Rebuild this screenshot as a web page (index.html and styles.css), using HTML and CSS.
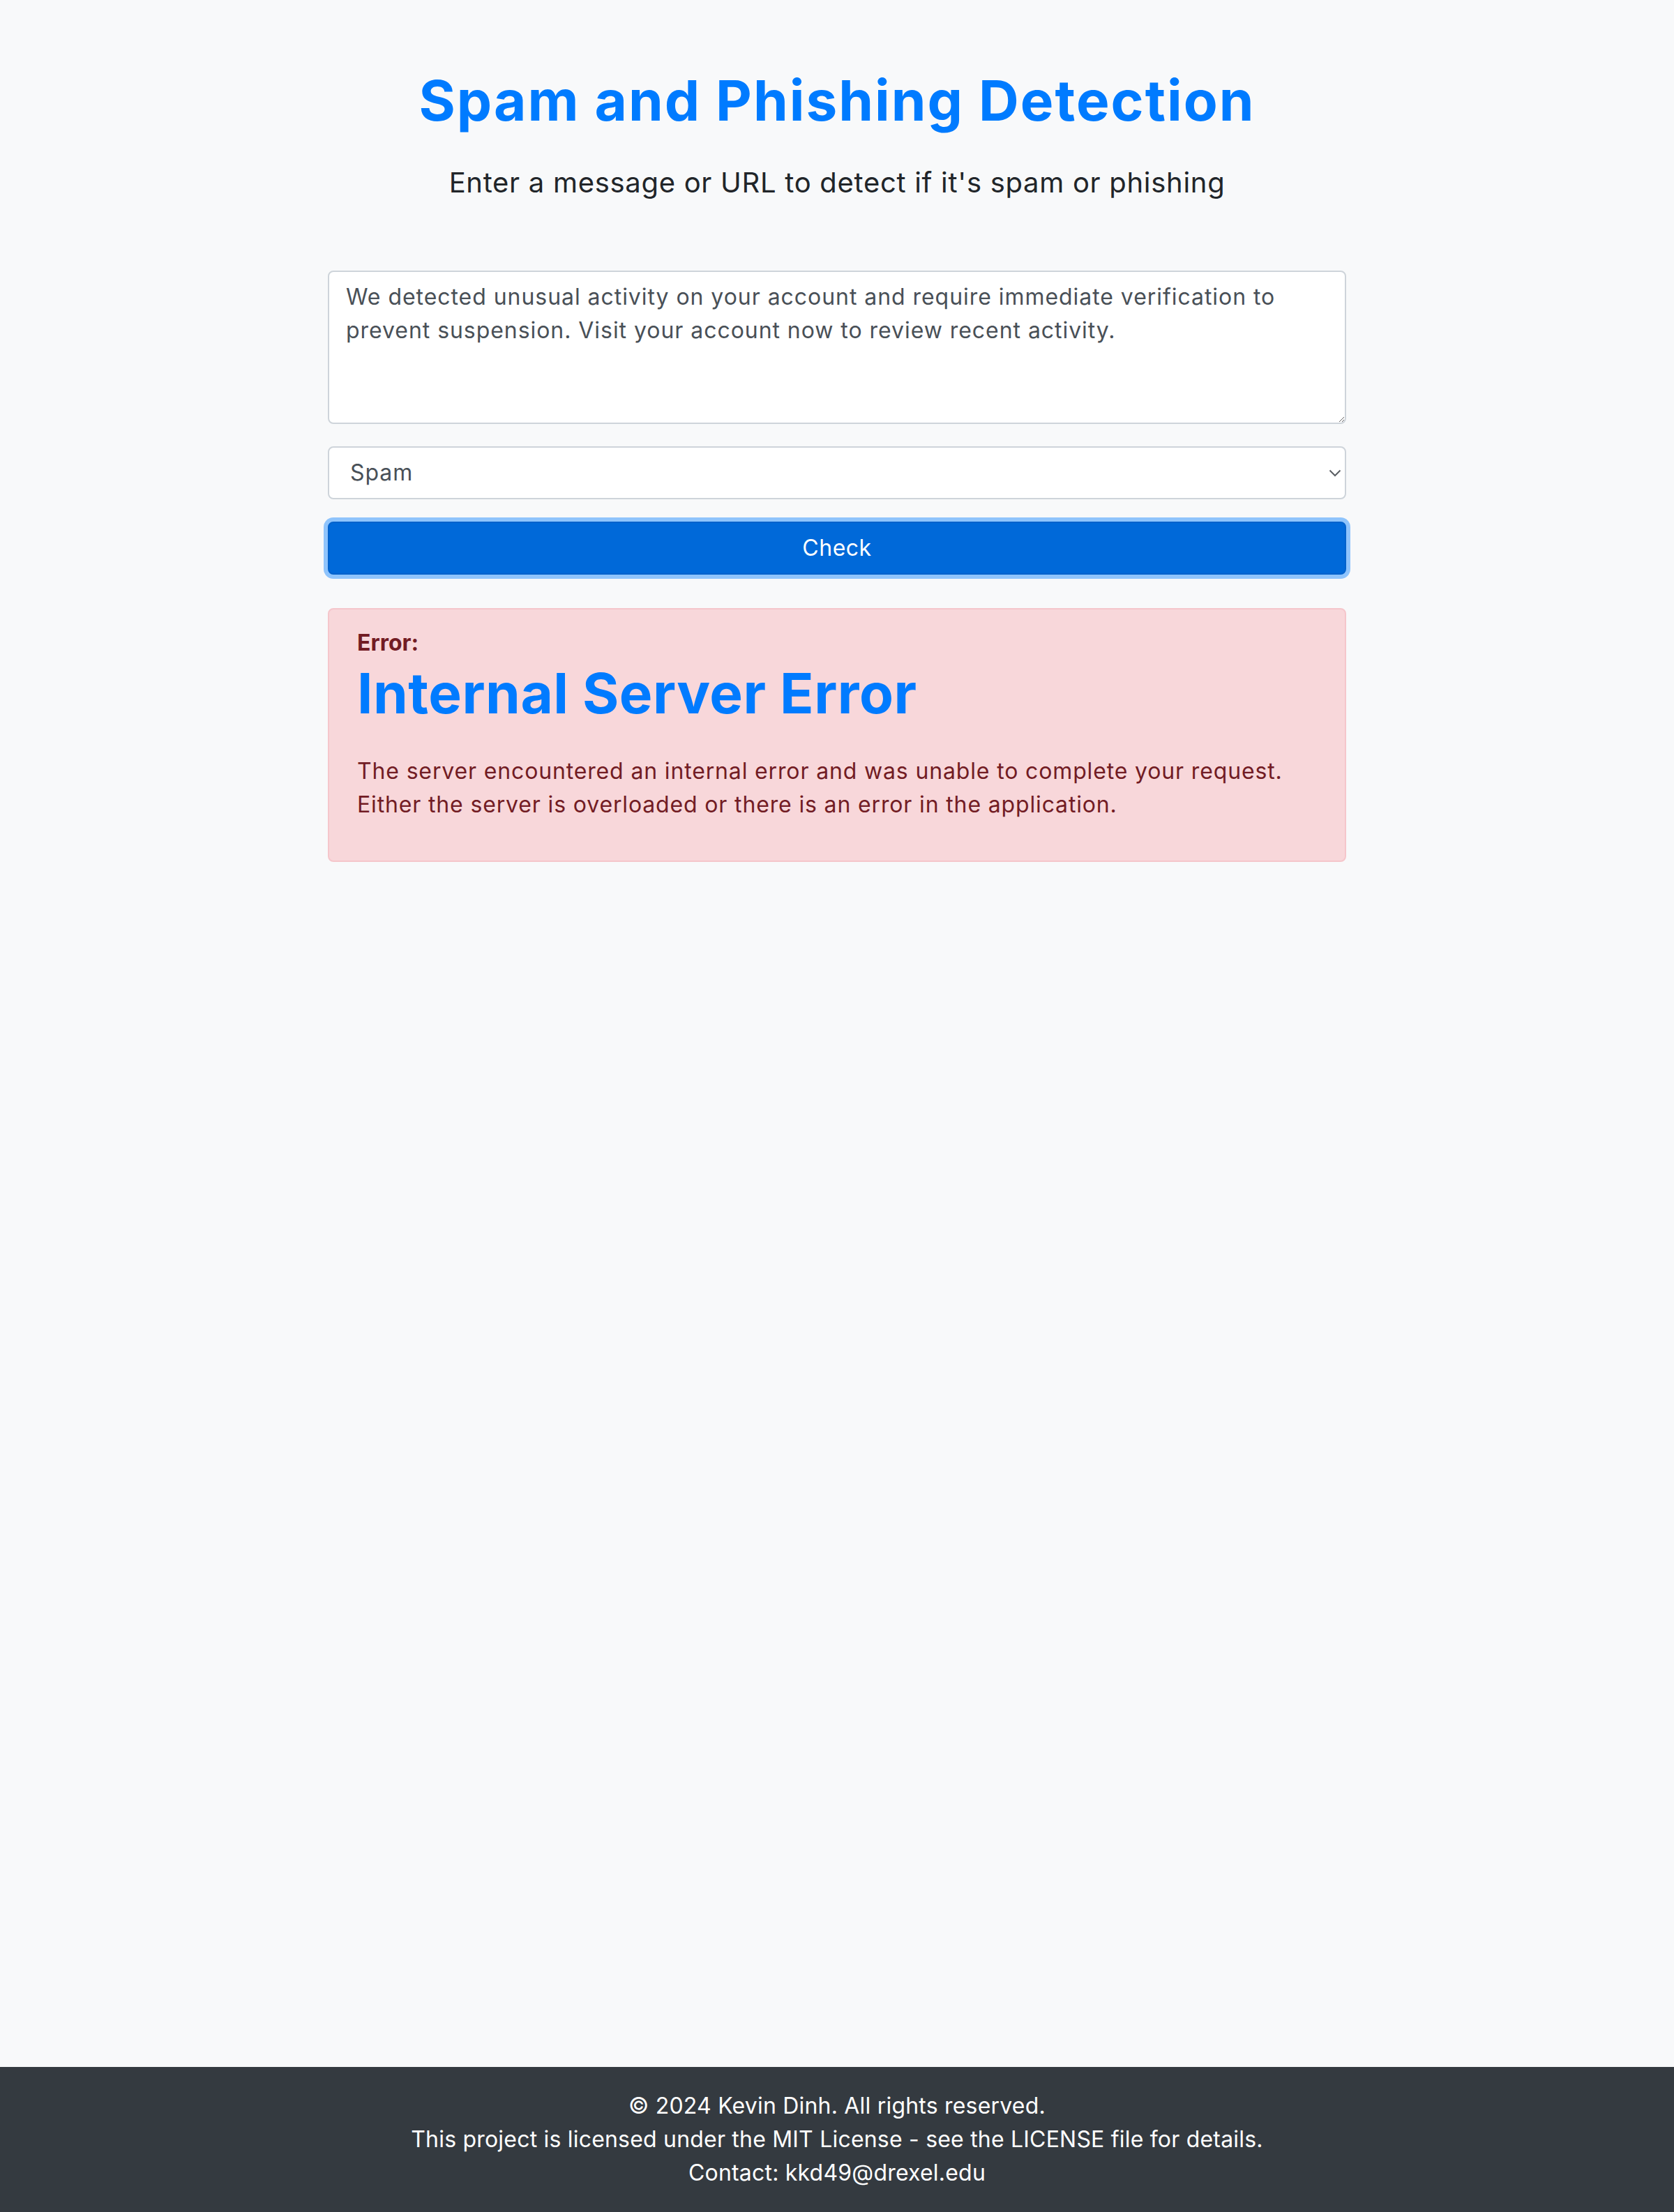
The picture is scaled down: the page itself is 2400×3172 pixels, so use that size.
FILE: index.html
```html
<!DOCTYPE html>
<html lang="en">
<head>
<meta charset="utf-8">
<title>Spam and Phishing Detection</title>
<link rel="stylesheet" href="styles.css">
</head>
<body>
<main class="page">
  <div class="container">
    <h1 class="title">Spam and Phishing Detection</h1>
    <p class="lead">Enter a message or URL to detect if it's spam or phishing</p>
    <form class="form">
      <textarea class="field textarea" rows="4">We detected unusual activity on your account and require immediate verification to prevent suspension. Visit your account now to review recent activity.</textarea>
      <div class="select-wrap">
        <select class="field select">
          <option>Spam</option>
          <option>Phishing</option>
        </select>
        <svg class="chevron" width="18" height="11" viewBox="0 0 18 11" aria-hidden="true"><path d="M1.5 1.5 L9 9 L16.5 1.5" fill="none" stroke="#5a5e63" stroke-width="2"/></svg>
      </div>
      <button type="button" class="btn">Check</button>
    </form>
    <div class="alert">
      <strong class="alert-label">Error:</strong>
      <h1 class="alert-title">Internal Server Error</h1>
      <p class="alert-text">The server encountered an internal error and was unable to complete your request. Either the server is overloaded or there is an error in the application.</p>
    </div>
  </div>
</main>
<footer class="footer">
  <p class="footer-line">© 2024 Kevin Dinh. All rights reserved.</p>
  <p class="footer-line">This project is licensed under the MIT License - see the LICENSE file for details.</p>
  <p class="footer-line">Contact: kkd49@drexel.edu</p>
</footer>
</body>
</html>
```
FILE: styles.css
```css
* { box-sizing: border-box; }
html, body { margin: 0; padding: 0; }
body {
  min-height: 100vh;
  display: flex;
  flex-direction: column;
  background: #f8f9fa;
  color: #212529;
  font-family: Inter, "Open Sans", "Liberation Sans", sans-serif;
  font-size: 32px;
  line-height: 48px;
}
.page { flex: 1; }
.container {
  width: 1460px;
  margin: 0 auto;
  padding-top: 96px;
}
.title {
  margin: 0 0 40px;
  text-align: center;
  color: #007bff;
  font-size: 80px;
  line-height: 96px;
  font-weight: 700;
  letter-spacing: 2px;
}
.lead {
  margin: 0 0 96px;
  text-align: center;
  font-size: 40px;
  line-height: 60px;
  font-weight: 400;
  letter-spacing: 0.7px;
  color: #212529;
}
.form {
  display: flex;
  flex-direction: column;
  gap: 32px;
}
.field {
  display: block;
  width: 100%;
  font-family: inherit;
  font-size: 32px;
  line-height: 48px;
  letter-spacing: 0.95px;
  color: #495057;
  background: #fff;
  border: 2px solid #ced4da;
  border-radius: 8px;
}
.textarea {
  height: 220px;
  padding: 12px 24px;
  resize: vertical;
}
.select-wrap { position: relative; }
.select {
  height: 76px;
  padding: 12px 60px 12px 30px;
  appearance: none;
  -webkit-appearance: none;
}
.chevron {
  position: absolute;
  right: 7px;
  top: 33px;
  pointer-events: none;
}
.btn {
  display: block;
  width: 100%;
  height: 76px;
  font-family: inherit;
  font-size: 32px;
  line-height: 48px;
  letter-spacing: 0.5px;
  color: #fff;
  background: #0069d9;
  border: 2px solid #0062cc;
  border-radius: 8px;
  box-shadow: 0 0 0 6px #8fc4fc;
}
.alert {
  margin-top: 48px;
  padding: 24px 40px;
  background: #f8d7da;
  border: 2px solid #f5c6cb;
  border-radius: 8px;
  color: #721c24;
}
.alert-label {
  display: block;
  font-weight: 700;
}
.alert-title {
  margin: 0 0 40px;
  color: #007bff;
  font-size: 80px;
  line-height: 96px;
  font-weight: 700;
  letter-spacing: 0.5px;
}
.alert-text {
  margin: 0 0 32px;
  letter-spacing: 0.85px;
}
.footer {
  background: #343a40;
  color: #fff;
  text-align: center;
  padding: 32px 0;
  letter-spacing: 0.2px;
}
.footer-line { margin: 0; }
```
